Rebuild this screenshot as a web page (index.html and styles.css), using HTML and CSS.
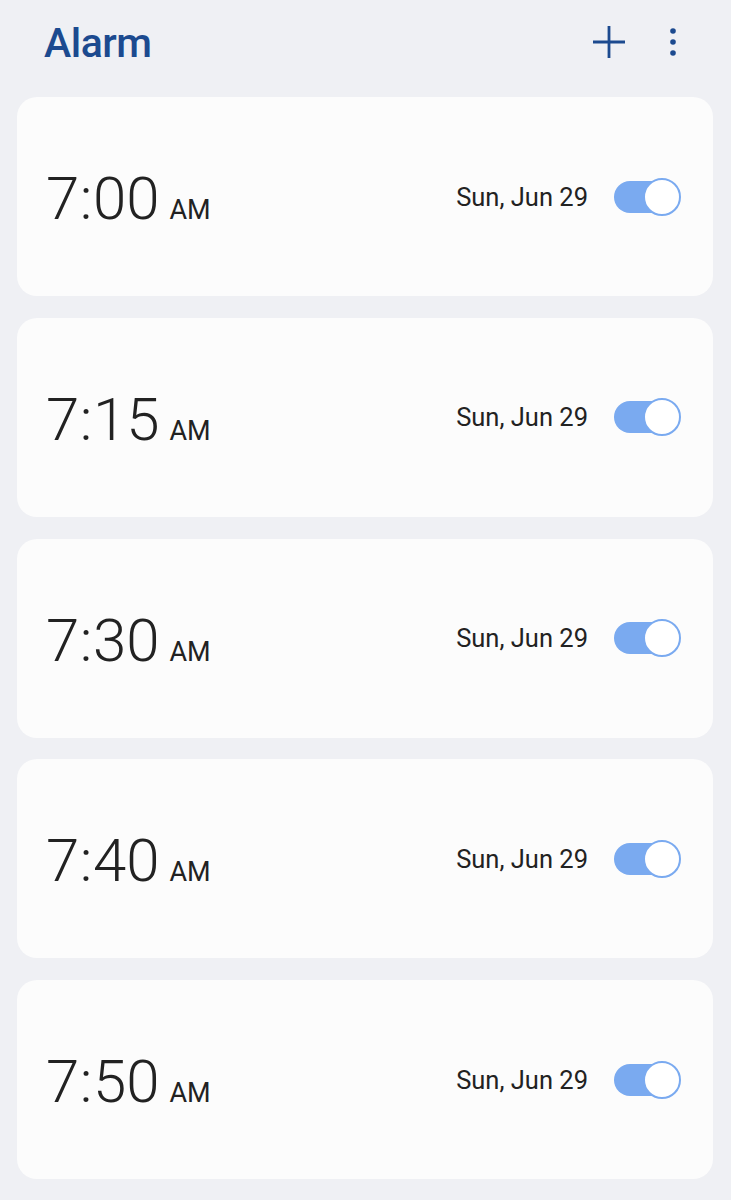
FILE: index.html
```html
<!DOCTYPE html>
<html>
<head>
  <link rel="stylesheet" href="styles.css">
</head>
<body>
    <div class="header">
        <h1 class="title">Alarm</h1>
        <div class="actions">
            <svg class="icon-add" width="36" height="36" viewBox="0 0 36 36">
                <path d="M18 2 V34 M2 18 H34" stroke="#1c4a8f" stroke-width="2.8" fill="none"/>
            </svg>
            <svg class="icon-more" width="12" height="36" viewBox="0 0 12 36">
                <circle cx="6" cy="7" r="2.8" fill="#1c4a8f"/>
                <circle cx="6" cy="18" r="2.8" fill="#1c4a8f"/>
                <circle cx="6" cy="29" r="2.8" fill="#1c4a8f"/>
            </svg>
        </div>
    </div>

    <div class="list">
        <div class="card">
            <div class="time">7<span class="colon">:</span>00<span class="ampm">AM</span></div>
            <div class="right">
                <span class="date">Sun, Jun 29</span>
                <div class="toggle"><div class="knob"></div></div>
            </div>
        </div>
        <div class="card">
            <div class="time">7<span class="colon">:</span>15<span class="ampm">AM</span></div>
            <div class="right">
                <span class="date">Sun, Jun 29</span>
                <div class="toggle"><div class="knob"></div></div>
            </div>
        </div>
        <div class="card">
            <div class="time">7<span class="colon">:</span>30<span class="ampm">AM</span></div>
            <div class="right">
                <span class="date">Sun, Jun 29</span>
                <div class="toggle"><div class="knob"></div></div>
            </div>
        </div>
        <div class="card">
            <div class="time">7<span class="colon">:</span>40<span class="ampm">AM</span></div>
            <div class="right">
                <span class="date">Sun, Jun 29</span>
                <div class="toggle"><div class="knob"></div></div>
            </div>
        </div>
        <div class="card">
            <div class="time">7<span class="colon">:</span>50<span class="ampm">AM</span></div>
            <div class="right">
                <span class="date">Sun, Jun 29</span>
                <div class="toggle"><div class="knob"></div></div>
            </div>
        </div>
    </div>
</body>
</html>
```

FILE: styles.css
```css
body{
    margin: 0;
    background-color: #eff0f4;
    font-family: Roboto, "Noto Sans", sans-serif;
    color: #222;
}

.header{
    display: flex;
    justify-content: space-between;
    align-items: center;
    height: 97px;
    padding: 0 52px 0 44px;
    box-sizing: border-box;
}

.title{
    margin: 0 0 12px 0;
    font-size: 41px;
    font-weight: 500;
    color: #1c4a8f;
    letter-spacing: -0.5px;
}

.actions{
    display: flex;
    align-items: center;
    gap: 40px;
    margin-bottom: 14px;
}

.list{
    display: flex;
    flex-direction: column;
    gap: 21.75px;
    padding: 0 18px 0 17px;
}

.card{
    display: flex;
    justify-content: space-between;
    align-items: center;
    height: 199px;
    background-color: #fcfcfc;
    border-radius: 20px;
    padding: 0 33px 0 29px;
    box-sizing: border-box;
}

.time{
    font-size: 60px;
    font-weight: 300;
    line-height: 1;
    margin-top: 5px;
}

.colon{
    margin: 0 0.5px;
}

.ampm{
    font-size: 27px;
    font-weight: 400;
    margin-left: 10px;
}

.right{
    display: flex;
    align-items: center;
    gap: 26px;
}

.date{
    font-size: 25.5px;
}

.toggle{
    position: relative;
    width: 66px;
    height: 32px;
    border-radius: 16px;
    background-color: #7aaaf0;
}

.knob{
    position: absolute;
    right: -1px;
    top: -3px;
    width: 34px;
    height: 34px;
    border-radius: 50%;
    background-color: #fff;
    border: 2px solid #7aaaf0;
}
```
